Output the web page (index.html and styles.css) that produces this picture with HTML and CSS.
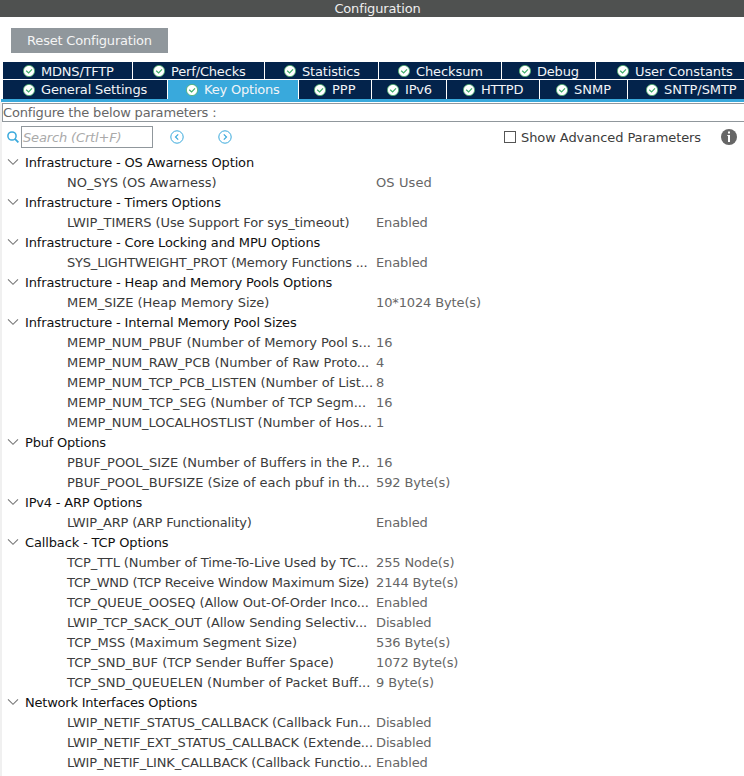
FILE: index.html
```
<!DOCTYPE html>
<html lang="en">
<head>
<meta charset="utf-8">
<title>Configuration</title>
<link rel="stylesheet" href="styles.css">
</head>
<body>
<svg width="0" height="0" class="defs">
  <symbol id="ok" viewBox="0 0 12 12"><circle cx="6" cy="6" r="5.6" fill="#fff" stroke="#4bae6c" stroke-width=".8"/><path d="M3.2 5.7 5.6 8 9 4.4" fill="none" stroke="#3fae68" stroke-width="1.2"/></symbol>
  <symbol id="chev" viewBox="0 0 12 8"><path d="M1 1.3 6 6.3 11 1.3" fill="none" stroke="#777" stroke-width="1.1"/></symbol>
</svg>
<header class="title">Configuration</header>
<div class="toolbar"><button class="reset">Reset Configuration</button></div>
<nav class="tabs">
  <div class="tab-row upper">
    <div class="tab mdns"><svg><use href="#ok"/></svg><span class="t20">MDNS/TFTP</span></div>
    <div class="tab perf"><svg><use href="#ok"/></svg><span class="t15">Perf/Checks</span></div>
    <div class="tab stats"><svg><use href="#ok"/></svg><span class="t15">Statistics</span></div>
    <div class="tab checksum"><svg><use href="#ok"/></svg><span class="t10">Checksum</span></div>
    <div class="tab debug"><svg><use href="#ok"/></svg><span class="t20">Debug</span></div>
    <div class="tab user"><svg><use href="#ok"/></svg><span class="t10">User Constants</span></div>
  </div>
  <div class="tab-row lower">
    <div class="tab general"><svg><use href="#ok"/></svg><span class="t15">General Settings</span></div>
    <div class="tab key active"><svg><use href="#ok"/></svg><span class="t20">Key Options</span></div>
    <div class="tab ppp"><svg><use href="#ok"/></svg><span>PPP</span></div>
    <div class="tab ipv6"><svg><use href="#ok"/></svg><span class="t20">IPv6</span></div>
    <div class="tab httpd"><svg><use href="#ok"/></svg><span class="t20">HTTPD</span></div>
    <div class="tab snmp"><svg><use href="#ok"/></svg><span>SNMP</span></div>
    <div class="tab sntp"><svg><use href="#ok"/></svg><span class="t10">SNTP/SMTP</span></div>
  </div>
</nav>
<main class="panel">
  <div class="caption">Configure the below parameters :</div>
  <div class="search">
    <svg class="lens" viewBox="0 0 12 12"><circle cx="5" cy="5" r="4.1" fill="none" stroke="#39a9dc" stroke-width="1.5"/><path d="M7.9 7.9 11.4 11.4" stroke="#39a9dc" stroke-width="1.8"/></svg>
    <div class="field">Search (Crtl+F)</div>
    <svg class="step prev" viewBox="0 0 14 14"><circle cx="7" cy="7" r="6.2" fill="none" stroke="#39a9dc"/><path d="M8.2 4.3 5.5 7 8.2 9.7" fill="none" stroke="#39a9dc" stroke-width="1.2"/></svg>
    <svg class="step next" viewBox="0 0 14 14"><circle cx="7" cy="7" r="6.2" fill="none" stroke="#39a9dc"/><path d="M5.8 4.3 8.5 7 5.8 9.7" fill="none" stroke="#39a9dc" stroke-width="1.2"/></svg>
    <label class="advanced"><i class="box"></i><span>Show Advanced Parameters</span></label>
    <svg class="info" viewBox="0 0 16 16"><circle cx="8" cy="8" r="8" fill="#666"/><path d="M7 2.500h2v2H7zM6.300 6H9v7H7V7h-.7z" fill="#fff"/></svg>
  </div>
  <div class="tree">
    <div class="group"><svg><use href="#chev"/></svg>Infrastructure - OS Awarness Option</div>
    <div class="row"><span class="name">NO_SYS (OS Awarness)</span><span class="value wide">OS Used</span></div>
    <div class="group"><svg><use href="#chev"/></svg>Infrastructure - Timers Options</div>
    <div class="row"><span class="name t10">LWIP_TIMERS (Use Support For sys_timeout)</span><span class="value">Enabled</span></div>
    <div class="group"><svg><use href="#chev"/></svg>Infrastructure - Core Locking and MPU Options</div>
    <div class="row"><span class="name t20">SYS_LIGHTWEIGHT_PROT (Memory Functions ...</span><span class="value">Enabled</span></div>
    <div class="group"><svg><use href="#chev"/></svg>Infrastructure - Heap and Memory Pools Options</div>
    <div class="row"><span class="name">MEM_SIZE (Heap Memory Size)</span><span class="value">10*1024 Byte(s)</span></div>
    <div class="group"><svg><use href="#chev"/></svg>Infrastructure - Internal Memory Pool Sizes</div>
    <div class="row"><span class="name t03">MEMP_NUM_PBUF (Number of Memory Pool s...</span><span class="value">16</span></div>
    <div class="row"><span class="name t03">MEMP_NUM_RAW_PCB (Number of Raw Proto...</span><span class="value">4</span></div>
    <div class="row"><span class="name t03">MEMP_NUM_TCP_PCB_LISTEN (Number of List...</span><span class="value">8</span></div>
    <div class="row"><span class="name">MEMP_NUM_TCP_SEG (Number of TCP Segm...</span><span class="value">16</span></div>
    <div class="row"><span class="name t05">MEMP_NUM_LOCALHOSTLIST (Number of Hos...</span><span class="value">1</span></div>
    <div class="group t20"><svg><use href="#chev"/></svg>Pbuf Options</div>
    <div class="row"><span class="name t03">PBUF_POOL_SIZE (Number of Buffers in the P...</span><span class="value">16</span></div>
    <div class="row"><span class="name t05">PBUF_POOL_BUFSIZE (Size of each pbuf in th...</span><span class="value">592 Byte(s)</span></div>
    <div class="group t20"><svg><use href="#chev"/></svg>IPv4 - ARP Options</div>
    <div class="row"><span class="name t20">LWIP_ARP (ARP Functionality)</span><span class="value">Enabled</span></div>
    <div class="group"><svg><use href="#chev"/></svg>Callback - TCP Options</div>
    <div class="row"><span class="name t10">TCP_TTL (Number of Time-To-Live Used by TC...</span><span class="value">255 Node(s)</span></div>
    <div class="row"><span class="name t22">TCP_WND (TCP Receive Window Maximum Size)</span><span class="value">2144 Byte(s)</span></div>
    <div class="row"><span class="name t10">TCP_QUEUE_OOSEQ (Allow Out-Of-Order Inco...</span><span class="value">Enabled</span></div>
    <div class="row"><span class="name t10">LWIP_TCP_SACK_OUT (Allow Sending Selectiv...</span><span class="value">Disabled</span></div>
    <div class="row"><span class="name">TCP_MSS (Maximum Segment Size)</span><span class="value">536 Byte(s)</span></div>
    <div class="row"><span class="name">TCP_SND_BUF (TCP Sender Buffer Space)</span><span class="value">1072 Byte(s)</span></div>
    <div class="row"><span class="name">TCP_SND_QUEUELEN (Number of Packet Buff...</span><span class="value">9 Byte(s)</span></div>
    <div class="group t22"><svg><use href="#chev"/></svg>Network Interfaces Options</div>
    <div class="row"><span class="name t10">LWIP_NETIF_STATUS_CALLBACK (Callback Fun...</span><span class="value">Disabled</span></div>
    <div class="row"><span class="name t10">LWIP_NETIF_EXT_STATUS_CALLBACK (Extende...</span><span class="value">Disabled</span></div>
    <div class="row"><span class="name t15">LWIP_NETIF_LINK_CALLBACK (Callback Functio...</span><span class="value">Enabled</span></div>
  </div>
</main>
</body>
</html>
```
FILE: styles.css
```
* { box-sizing: border-box; }
body { margin: 0; width: 744px; height: 776px; overflow: hidden; background: #fff; font: 13px/20px "DejaVu Sans", sans-serif; color: #3c3c3c; white-space: nowrap; }
svg { display: block; flex: none; }
.defs { display: none; }
.title { height: 17px; line-height: 17px; padding-left: 11px; text-align: center; background: #4f5150; color: #eee; letter-spacing: -.15px; }
.toolbar { height: 45px; padding: 11px 0 0 11px; }
.reset { display: block; width: 157px; height: 25px; padding: 0; border: 0; background: #90979c; color: #f4f4f4; font: inherit; line-height: 25px; letter-spacing: -.2px; }
.tabs { height: 40px; border-bottom: 3px solid #39a9dc; margin-left: 1px; padding-left: 2px; }
.tab-row { display: flex; gap: 1px; }
.upper { height: 17px; margin-bottom: 1px; }
.lower { height: 19px; }
.tab { display: flex; flex: none; align-items: center; gap: 6px; background: #03234b; color: #f2f4f7; line-height: 18px; }
.tab svg { width: 12px; height: 12px; }
.upper span { padding-top: 2px; }
.active { background: #39a9dc; }
.mdns { width: 129px; padding-left: 20px; }
.perf { width: 131px; padding-left: 20px; }
.stats { width: 113px; padding-left: 19px; }
.checksum { width: 122px; padding-left: 19px; }
.debug { width: 93px; padding-left: 17px; }
.user { width: 148px; padding-left: 21px; }
.general { width: 164px; padding-left: 20px; }
.key { width: 130px; padding-left: 18px; }
.ppp { width: 72px; padding-left: 15px; }
.ipv6 { width: 74px; padding-left: 15px; }
.httpd { width: 92px; padding-left: 16px; }
.snmp { width: 87px; padding-left: 16px; }
.sntp { width: 116px; padding-left: 18px; }
.panel { height: 674px; padding-top: 1px; border-left: 2px solid #f0f0f0; }
.caption { height: 19px; line-height: 18px; border: 1px solid #90979c; border-right: 0; color: #666; letter-spacing: -.18px; }
.search { display: flex; align-items: center; height: 30px; padding-left: 5px; }
.lens { width: 12px; height: 12px; margin-right: 2px; }
.field { width: 132px; height: 22px; border: 1px solid #90979c; padding-left: 1px; font-style: italic; color: #aaa; line-height: 22px; letter-spacing: -.15px; }
.step { width: 14px; height: 14px; }
.prev { margin-left: 17px; }
.next { margin-left: 34px; }
.advanced { display: flex; align-items: center; margin-left: 272px; gap: 5px; letter-spacing: -.08px; }
.advanced span { padding-top: 1px; }
.box { width: 12px; height: 12px; border: 1px solid #555; }
.info { width: 16px; height: 16px; margin-left: 20px; }
.tree { padding-top: 1px; }
.group { display: flex; align-items: center; height: 20px; padding-left: 5px; color: #111; letter-spacing: -.14px; }
.group svg { width: 12px; height: 8px; margin: 0 6px 2px 0; }
.row { display: flex; height: 20px; padding-left: 65px; }
.name { width: 309px; flex: none; }
.value { color: #666; letter-spacing: -.13px; }
.wide { letter-spacing: .1px; }

.t03 { letter-spacing: -.03px; }
.t05 { letter-spacing: -.05px; }
.t10 { letter-spacing: -.1px; }
.t15 { letter-spacing: -.16px; }
.t20 { letter-spacing: -.2px; }
.t22 { letter-spacing: -.22px; }
```
